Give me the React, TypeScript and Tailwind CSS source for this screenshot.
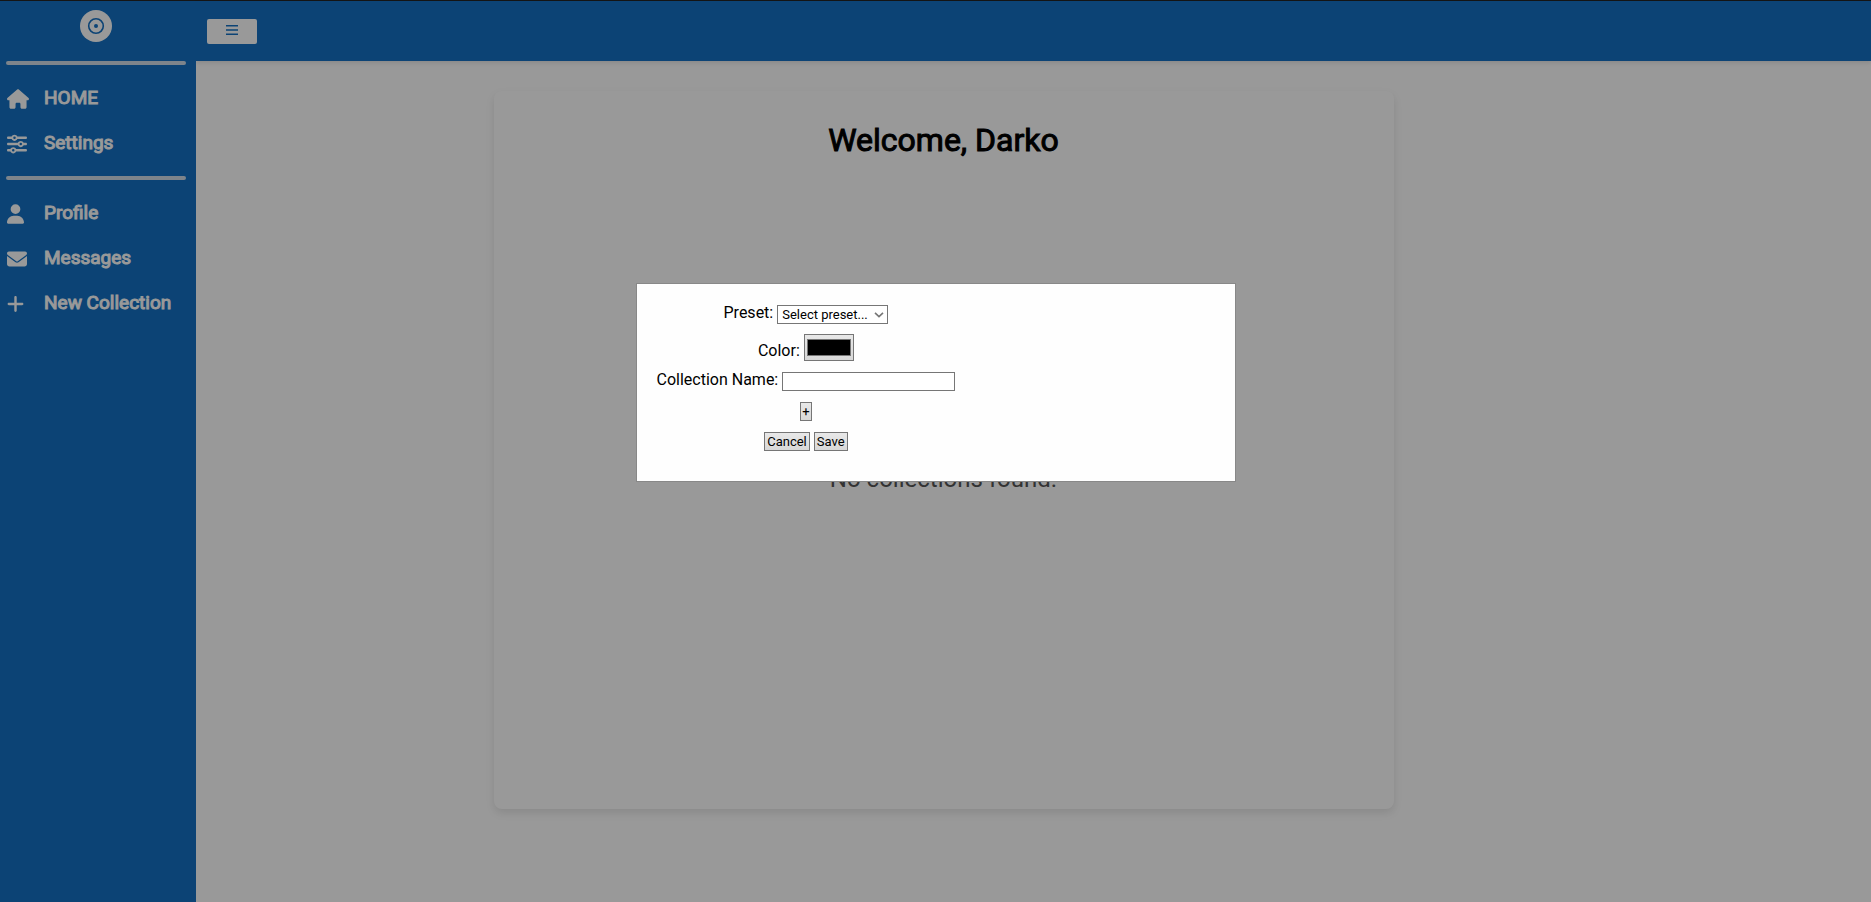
import type { ReactNode } from "react";
import { FaEnvelope, FaHouse, FaPlus, FaSliders, FaUser } from "react-icons/fa6";

function NavLink({ icon, children }: { icon: ReactNode; children: ReactNode }) {
  return (
    <a
      href="#"
      className="flex h-[45px] items-center text-[19px] text-white [-webkit-text-stroke:1px_white]"
    >
      <span className="w-[37px] shrink-0">{icon}</span>
      <span>{children}</span>
    </a>
  );
}

function Divider() {
  return <hr className="h-1 rounded-sm border-0 bg-[#d3dde8]" />;
}

function Sidebar() {
  return (
    <aside className="relative z-10 w-[196px] shrink-0 bg-[#1571c4] pt-[9px] pr-[10px] pl-[6px]">
      <div className="flex h-[51px] justify-center">
        <svg viewBox="0 0 32 32" className="size-8" role="img" aria-label="Logo">
          <circle cx="16" cy="16" r="16" fill="white" />
          <circle cx="16" cy="16" r="7.3" fill="none" stroke="#1571c4" strokeWidth="1.6" />
          <circle cx="16" cy="16" r="2" fill="#1571c4" />
        </svg>
      </div>
      <Divider />
      <nav className="pt-[11px] pb-[10px] pl-px">
        <NavLink icon={<FaHouse className="h-5 w-[22px]" />}>HOME</NavLink>
        <NavLink icon={<FaSliders className="h-5 w-5" />}>Settings</NavLink>
      </nav>
      <Divider />
      <nav className="pt-[11px] pb-[10px] pl-px">
        <NavLink icon={<FaUser className="h-5 w-[17px]" />}>Profile</NavLink>
        <NavLink icon={<FaEnvelope className="h-5 w-5" />}>Messages</NavLink>
        <NavLink icon={<FaPlus className="h-5 w-[17px]" />}>New Collection</NavLink>
      </nav>
    </aside>
  );
}

const buttonClass =
  "h-[19px] border border-[#767676] bg-linear-to-b from-[#e8e8e8] to-[#d8d8d8] text-[13px] leading-4";

function CollectionDialog() {
  return (
    <div className="fixed inset-0 z-20 flex items-start justify-center bg-black/40 pt-[283px]">
      <div
        role="dialog"
        aria-modal="true"
        aria-label="New collection"
        className="w-full max-w-[600px] border border-[#888] bg-[#fefefe] p-5"
      >
        <form className="flex w-fit flex-col items-center pt-px pb-[10px]">
          <div className="flex h-[19px] gap-1">
            <label htmlFor="preset" className="leading-4">
              Preset:
            </label>
            <span className="relative flex items-center">
              <select
                id="preset"
                className="h-[19px] w-[111px] appearance-none border border-[#767676] bg-white pl-1 text-[13px] leading-4"
              >
                <option>Select preset...</option>
              </select>
              <svg
                viewBox="0 0 10 6"
                className="pointer-events-none absolute right-1 h-[6px] w-[10px]"
                fill="none"
                stroke="#767676"
                strokeWidth="1.6"
              >
                <path d="M1 0.8 L5 4.6 L9 0.8" />
              </svg>
            </span>
          </div>
          <div className="mt-[10px] flex h-[27px] items-end gap-1">
            <label htmlFor="color" className="leading-5">
              Color:
            </label>
            <input
              id="color"
              type="color"
              defaultValue="#000000"
              className="h-[27px] w-[50px] border border-[#767676] bg-linear-to-b from-[#e8e8e8] to-[#d8d8d8] p-0"
            />
          </div>
          <div className="mt-[11px] flex h-[19px] gap-1">
            <label htmlFor="name" className="leading-4">
              Collection Name:
            </label>
            <input
              id="name"
              type="text"
              className="h-[19px] w-[173px] border border-[#767676] bg-white px-px text-[13px]"
            />
          </div>
          <button type="button" className={buttonClass + " mt-[11px] px-px"}>
            +
          </button>
          <div className="mt-[11px] flex gap-1">
            <button type="button" className={buttonClass + " px-[2px]"}>
              Cancel
            </button>
            <button type="button" className={buttonClass + " px-[2px]"}>
              Save
            </button>
          </div>
        </form>
      </div>
    </div>
  );
}

export default function App() {
  return (
    <div className="flex min-h-screen flex-col border-t border-[#232323] bg-white font-[Roboto,sans-serif] text-base text-black">
      <div className="flex grow">
        <Sidebar />
        <div className="flex grow flex-col">
          <header className="flex h-[60px] items-center bg-[#1571c4] px-[11px] shadow-[0_2px_4px_rgba(0,0,0,0.1)]">
            <button
              type="button"
              aria-label="Toggle menu"
              className="flex h-[25px] w-[50px] items-center justify-center rounded-xs bg-white pb-[3px] text-[#1571c4]"
            >
              <svg
                viewBox="0 0 12 10"
                className="h-[10px] w-[12px]"
                stroke="currentColor"
                strokeWidth="1.4"
              >
                <path d="M0 0.8H12M0 5H12M0 9.2H12" />
              </svg>
            </button>
          </header>
          <main className="flex grow justify-center pt-[30px] pr-[180px] pb-[93px]">
            <section className="flex w-full max-w-[900px] flex-col rounded-lg bg-white pt-[29px] text-center shadow-[0_4px_8px_rgba(0,0,0,0.1)]">
              <h1 className="text-[32px] leading-10 [-webkit-text-stroke:1px_black]">
                Welcome, Darko
              </h1>
              <p className="mt-[303px] text-2xl text-[#555]">No collections found.</p>
            </section>
          </main>
        </div>
      </div>
      <CollectionDialog />
    </div>
  );
}
